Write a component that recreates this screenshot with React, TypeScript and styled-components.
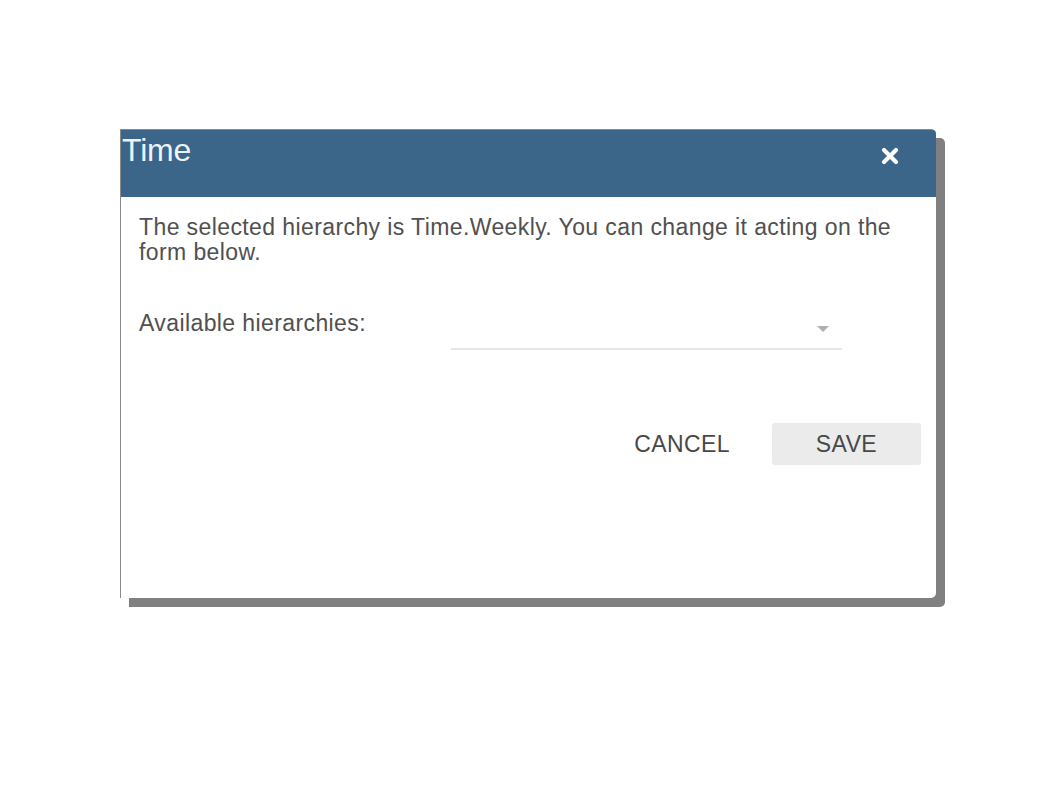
import styled, { createGlobalStyle } from 'styled-components'

const GlobalStyle = createGlobalStyle`
  html, body {
    margin: 0;
    padding: 0;
    background: #fff;
  }
  body {
    font-family: "Liberation Sans", Arial, sans-serif;
  }
`

const Page = styled.div`
  width: 1058px;
  height: 794px;
  padding: 129px 0 0 120px;
  box-sizing: border-box;
`

const Dialog = styled.div`
  width: 816px;
  height: 469px;
  box-sizing: border-box;
  border: 1px solid #8a8a8a;
  border-right: none;
  border-bottom: none;
  border-radius: 0 5px 5px 0;
  background: #fff;
  box-shadow: 9px 9px 0 #808080;
  display: flex;
  flex-direction: column;
`

const Header = styled.div`
  height: 67px;
  background: #3b6589;
  border-radius: 0 4px 0 0;
  display: flex;
  justify-content: space-between;
  align-items: flex-start;
`

const Title = styled.h1`
  margin: 0;
  padding: 3px 0 0 1px;
  color: #eef2f6;
  font-size: 32px;
  font-weight: 400;
  line-height: 35px;
  letter-spacing: -0.2px;
`

const Close = styled.button`
  border: none;
  background: none;
  padding: 0;
  margin: 17px 37px 0 0;
  width: 18px;
  height: 18px;
  cursor: pointer;
  display: flex;
  svg {
    display: block;
  }
`

const Body = styled.div`
  padding: 18px 18px 0 18px;
  color: #505050;
  font-size: 23px;
  letter-spacing: 0.4px;
`

const Intro = styled.p`
  margin: 0;
  line-height: 25px;
`

const Row = styled.div`
  display: flex;
  align-items: flex-end;
  margin-top: 46px;
`

const Label = styled.label`
  width: 312px;
  line-height: 25px;
  padding-bottom: 14px;
`

const Select = styled.div`
  width: 391px;
  height: 38px;
  border-bottom: 2px solid #e6e6e6;
  display: flex;
  justify-content: flex-end;
  align-items: center;
  padding-right: 13px;
  box-sizing: border-box;
`

const Arrow = styled.span`
  width: 0;
  height: 0;
  border-left: 6px solid transparent;
  border-right: 6px solid transparent;
  border-top: 6px solid #b0b0b0;
  margin-top: -2px;
`

const Actions = styled.div`
  display: flex;
  justify-content: flex-end;
  align-items: center;
  gap: 25px;
  margin-top: 73px;
  margin-right: -3px;
`

const Button = styled.button<{ $filled?: boolean }>`
  width: ${p => (p.$filled ? '149px' : '130px')};
  height: 42px;
  border: none;
  border-radius: 3px;
  background: ${p => (p.$filled ? '#ebebeb' : 'transparent')};
  color: #484848;
  font-family: "Liberation Sans", Arial, sans-serif;
  font-size: 23px;
  letter-spacing: 0.4px;
  cursor: pointer;
`

export default function App() {
  return (
    <Page>
      <GlobalStyle />
      <Dialog>
        <Header>
          <Title>Time</Title>
          <Close aria-label="close">
            <svg width="18" height="18" viewBox="0 0 18 18">
              <path
                d="M3 3 L15 15 M15 3 L3 15"
                stroke="#fff"
                strokeWidth="4.2"
                strokeLinecap="round"
              />
            </svg>
          </Close>
        </Header>
        <Body>
          <Intro>
            The selected hierarchy is Time.Weekly. You can change it acting on the form below.
          </Intro>
          <Row>
            <Label>Available hierarchies:</Label>
            <Select>
              <Arrow />
            </Select>
          </Row>
          <Actions>
            <Button>CANCEL</Button>
            <Button $filled>SAVE</Button>
          </Actions>
        </Body>
      </Dialog>
    </Page>
  )
}
